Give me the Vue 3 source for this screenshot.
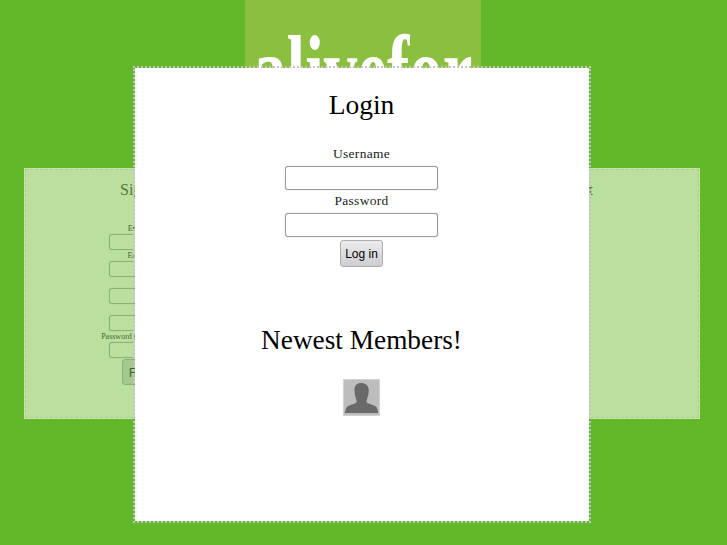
<script setup>
const signupFields = [
  { id: 'name', label: 'Enter name' },
  { id: 'email', label: 'Enter email' },
  { id: 'mail', label: 'Email' },
  { id: 'login', label: 'Login' },
  { id: 'again', label: 'Password (again, for safety)' },
]
</script>

<template>
  <div class="page">
    <header class="logo"><span class="logo-text">alivefor</span></header>

    <section class="backdrop">
      <div class="col signup">
        <h2 class="col-title">Sign up</h2>
        <form class="signup-form" @submit.prevent>
          <div v-for="f in signupFields" :key="f.id" class="sfield">
            <label class="slabel">{{ f.label }}</label>
            <input class="sinput" type="text" />
          </div>
          <button class="sbtn" type="button">Finish</button>
        </form>
      </div>
      <div class="col about">
        <h2 class="col-title">About</h2>
      </div>
    </section>

    <main class="modal">
      <h1 class="login-title">Login</h1>
      <form class="login-form" @submit.prevent>
        <label class="llabel">Username</label>
        <input class="linput" type="text" />
        <label class="llabel second">Password</label>
        <input class="linput" type="password" />
        <button class="lbtn" type="button">Log in</button>
      </form>
      <h2 class="members-title">Newest Members!</h2>
      <div class="avatar">
        <svg width="37" height="37" viewBox="0 0 37 37">
          <rect width="37" height="37" fill="#d2d2d2" />
          <rect x="1" y="1" width="35" height="35" fill="#bdbdbd" />
          <path d="M18 4c-4 0-6.500 2.500-6.500 6.600 0 3 .4 6 1.300 8.400.5 1.400.9 2.500.9 3.500 0 1.500-2.200 2.300-5.400 3.300-3.200 1-4.700 2-5.300 3.700L1.800 34h33.400l-1-4.500c-.6-1.700-2.100-2.700-5.300-3.700-3.200-1-5.400-1.800-5.400-3.300 0-1 .4-2.100.9-3.500.9-2.400 1.300-5.400 1.300-8.400C25.700 6.500 22 4 18 4z" fill="#696969" />
        </svg>
      </div>
    </main>
  </div>
</template>

<style>
html, body { margin: 0; background: #63b829; }
</style>

<style scoped>
.page {
  position: relative;
  width: 727px;
  height: 545px;
  overflow: hidden;
  background: #63b829;
  font-family: "Liberation Serif", serif;
}
.logo {
  display: flex;
  justify-content: center;
  width: 236px;
  height: 168px;
  margin-left: 245px;
  background: #8bbf3f;
  overflow: hidden;
}
.logo-text {
  flex: none;
  height: 100px;
  margin-top: 21px;
  font-size: 100px;
  line-height: 100px;
  font-weight: bold;
  color: #fff;
  white-space: nowrap;
  transform: scaleX(0.67);
  transform-origin: center;
}
.backdrop {
  display: flex;
  justify-content: space-between;
  box-sizing: border-box;
  width: 676px;
  height: 251px;
  margin-left: 24px;
  background: #bbdf9f;
  border: 1px solid #c6e5ad;
  outline: 1px dashed #a8cf8e;
  outline-offset: -2px;
  color: #4f7c3a;
}
.col { width: 300px; }
.col-title {
  margin: 12px 0 0;
  font-size: 16px;
  line-height: 18px;
  font-weight: normal;
}
.signup .col-title { padding-left: 95px; }
.about { text-align: right; }
.about .col-title { padding-right: 106px; }
.signup-form { margin-top: 24px; margin-left: 75px; width: 92px; }
.sfield { display: flex; flex-direction: column; align-items: center; }
.slabel { font-size: 8px; line-height: 11px; color: #3f6a2c; white-space: nowrap; }
.sinput {
  box-sizing: border-box;
  width: 74px;
  height: 16px;
  padding: 0;
  margin: 0;
  background: #bbdf9f;
  border: 1px solid #8ab176;
  border-radius: 3px;
  box-shadow: 0 0 1px #8ab176;
}
.sbtn {
  display: block;
  box-sizing: border-box;
  width: 48px;
  height: 26px;
  margin: 1px 0 0 22px;
  padding: 0;
  background: #a3c98f;
  border: 1px solid #8ab176;
  border-radius: 3px;
  font: 13px "Liberation Sans", sans-serif;
  color: #3f6a2c;
}
.modal {
  position: absolute;
  left: 133px;
  top: 66px;
  box-sizing: border-box;
  width: 458px;
  height: 457px;
  padding-right: 1px;
  background: #fff;
  background-clip: padding-box;
  border: 2px dotted #c4c4c4;
  display: flex;
  flex-direction: column;
  align-items: center;
  color: #000;
}
.login-title {
  margin: 21px 0 0;
  font-size: 27.5px;
  line-height: 32px;
  font-weight: normal;
}
.login-form {
  display: flex;
  flex-direction: column;
  align-items: center;
  margin-top: 24px;
}
.llabel {
  font-size: 13.5px;
  line-height: 17px;
  letter-spacing: 0.3px;
  color: #222;
}
.linput {
  box-sizing: border-box;
  width: 153px;
  height: 24px;
  margin: 4px 0 0;
  padding: 0;
  background: #fff;
  border: 1px solid #9c9c9c;
  border-radius: 3px;
  box-shadow: 0 0 1px #999;
}
.second { margin-top: 2px; }
.lbtn {
  box-sizing: border-box;
  width: 43px;
  height: 27px;
  margin-top: 3px;
  padding: 0;
  background: linear-gradient(#ececee, #cdcdd2);
  border: 1px solid #adadad;
  border-radius: 3px;
  font: 12px "Liberation Sans", sans-serif;
  color: #000;
}
.members-title {
  margin: 57px 0 0;
  font-size: 27.3px;
  line-height: 32px;
  font-weight: normal;
}
.avatar {
  margin-top: 23px;
  line-height: 0;
}
</style>
